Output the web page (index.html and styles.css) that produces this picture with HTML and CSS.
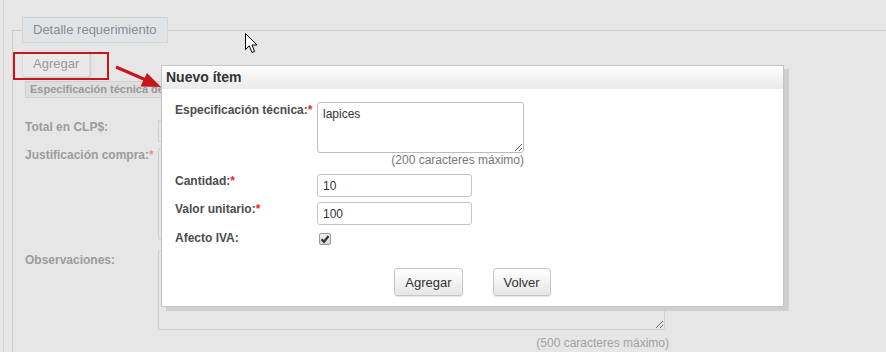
FILE: index.html
```html
<!DOCTYPE html>
<html lang="es">
<head>
    <meta charset="UTF-8">
    <meta name="viewport" content="width=device-width, initial-scale=1.0">
    <title>Detalle requerimiento</title>
    <link rel="stylesheet" href="styles.css">
</head>
<body>
    <div class="page">
        <div class="fieldset">
            <div class="legend">Detalle requerimiento</div>

            <button class="bg-button">Agregar</button>
            <div class="table-head">Especificación técnica del ítem</div>

            <div class="row row-total">
                <span class="bg-label">Total en CLP$:</span>
                <input class="bg-input" type="text" readonly>
            </div>
            <div class="row row-justif">
                <span class="bg-label">Justificación compra:<span class="req-light">*</span></span>
                <textarea class="bg-area bg-area-tall" readonly></textarea>
            </div>
            <div class="row row-obs">
                <span class="bg-label">Observaciones:</span>
                <textarea class="bg-area" readonly></textarea>
            </div>
            <div class="bg-note">(500 caracteres máximo)</div>
        </div>
    </div>

    <!-- resaltado del boton y flecha -->
    <div class="highlight"></div>
    <svg class="arrow" width="60" height="40" viewBox="110 60 60 40">
        <line x1="116" y1="67" x2="146" y2="80" stroke="#c4161c" stroke-width="3"/>
        <polygon points="161,87 140.5,86.5 147,73" fill="#c4161c"/>
    </svg>

    <div class="modal">
        <div class="modal-header">Nuevo ítem</div>
        <div class="modal-body">
            <div class="field">
                <label for="spec">Especificación técnica:<span class="req">*</span></label>
                <textarea id="spec" class="spec-area">lapices</textarea>
            </div>
            <div class="note">(200 caracteres máximo)</div>

            <div class="field field-qty">
                <label for="qty">Cantidad:<span class="req">*</span></label>
                <input id="qty" class="text-input" type="text" value="10">
            </div>
            <div class="field field-price">
                <label for="price">Valor unitario:<span class="req">*</span></label>
                <input id="price" class="text-input" type="text" value="100">
            </div>
            <div class="field field-iva">
                <label>Afecto IVA:</label>
                <span class="check">
                    <svg width="10" height="10" viewBox="0 0 10 10">
                        <path d="M1.5 5.2 L4 7.8 L8.6 2" fill="none" stroke="#333" stroke-width="2.2"/>
                    </svg>
                </span>
            </div>

            <div class="actions">
                <button class="btn">Agregar</button>
                <button class="btn">Volver</button>
            </div>
        </div>
    </div>

    <svg class="cursor" width="14" height="21" viewBox="0 0 14 21">
        <path d="M0.5 0.5 L0.5 16.5 L4.3 12.8 L7 19.5 L9.6 18.4 L7 12 L12 12 Z" fill="#fff" stroke="#000" stroke-width="1"/>
    </svg>
</body>
</html>
```

FILE: styles.css
```css
body {
    margin: 0;
    background-color: #e6e6e6;
    font-family: 'Liberation Sans', Arial, sans-serif;
    font-size: 12px;
    color: #333;
    overflow: hidden;
    height: 352px;
}
.page {
    margin-left: 3px;
    border-left: 1px solid #d6d6d6;
    height: 352px;
    padding-left: 8px;
    overflow: hidden;
}
.fieldset {
    margin-top: 30px;
    border-top: 1px solid #cdcdcd;
    border-left: 1px solid #cdcdcd;
    padding-left: 9px;
    height: 340px;
}
.legend {
    display: block;
    width: max-content;
    margin-top: -14px;
    height: 24px;
    line-height: 24px;
    padding: 0 10px;
    font-size: 13px;
    color: #8c8c8c;
    background: #e1e4e7;
    border: 1px solid #d2d5d8;
}
.bg-button {
    display: block;
    margin-top: 7px;
    height: 27px;
    padding: 0 10px;
    font-family: inherit;
    font-size: 13px;
    color: #999;
    background: #e9e9e9;
    border: 1px solid #dadada;
    border-radius: 2px;
    box-shadow: 1px 1px 2px rgba(0, 0, 0, 0.12);
}
.table-head {
    margin: 4px 0 0 3px;
    width: 640px;
    height: 15px;
    line-height: 15px;
    padding-left: 4px;
    font-size: 11px;
    font-weight: bold;
    color: #999;
    background: #dedede;
    border: 1px solid #d0d0d0;
    white-space: nowrap;
    overflow: hidden;
}
.row {
    display: flex;
    align-items: flex-start;
    margin-left: 3px;
}
.bg-label {
    width: 133px;
    flex-shrink: 0;
    font-weight: bold;
    line-height: 14px;
    color: #9c9c9c;
}
.req-light {
    color: #f09090;
}
.row-total {
    margin-top: 22px;
}
.row-justif {
    margin-top: 6px;
}
.row-obs {
    margin-top: 10px;
}
.row-obs .bg-label {
    padding-top: 3px;
}
.bg-input {
    width: 200px;
    height: 22px;
    box-sizing: border-box;
    margin: 0;
    background: #e6e6e6;
    border: 1px solid #cfcfcf;
}
.bg-area {
    display: block;
    width: 507px;
    height: 80px;
    box-sizing: border-box;
    background: #e6e6e6;
    border: 1px solid #cfcfcf;
    border-radius: 2px;
    margin: 0;
}
.bg-area-tall {
    height: 92px;
}
.bg-note {
    margin: 6px 0 0 136px;
    width: 511px;
    text-align: right;
    line-height: 14px;
    color: #a2a2a2;
}

.highlight {
    position: absolute;
    left: 13px;
    top: 52px;
    width: 96px;
    height: 28px;
    box-sizing: border-box;
    border: 2px solid #c4161c;
}
.arrow {
    position: absolute;
    left: 110px;
    top: 60px;
}

.modal {
    position: absolute;
    left: 161px;
    top: 65px;
    width: 623px;
    box-sizing: border-box;
    background: #fff;
    border: 1px solid #c6c6c6;
    box-shadow: 5px 4px 0 #cfcfcf;
}
.modal-header {
    height: 23px;
    line-height: 23px;
    padding-left: 4px;
    font-size: 14px;
    font-weight: bold;
    color: #333;
    background: linear-gradient(#fefefe, #eaeaea);
}
.modal-body {
    padding: 13px 13px 10px;
}
.field {
    display: flex;
    align-items: flex-start;
}
.field label {
    width: 142px;
    flex-shrink: 0;
    font-weight: bold;
    line-height: 14px;
    color: #4d4d4d;
}
.field:first-child label {
    padding-top: 1px;
}
.req {
    color: #e42b2b;
}
.spec-area {
    width: 207px;
    height: 51px;
    box-sizing: border-box;
    margin: 0;
    padding: 4px 5px;
    font-family: inherit;
    font-size: 12px;
    line-height: 14px;
    color: #333;
    border: 1px solid #bdbdbd;
    border-radius: 3px;
    resize: both;
}
.note {
    margin-left: 142px;
    width: 207px;
    text-align: right;
    line-height: 14px;
    color: #777;
}
.field-qty {
    margin-top: 7px;
}
.field-price {
    margin-top: 5px;
}
.text-input {
    width: 155px;
    height: 23px;
    box-sizing: border-box;
    margin: 0;
    padding: 0 5px;
    font-family: inherit;
    font-size: 12px;
    color: #333;
    border: 1px solid #c4c4c4;
    border-radius: 3px;
}
.field-iva {
    margin-top: 8px;
}
.field-iva label {
    margin-top: -2px;
}
.check {
    margin-left: 2px;
    width: 12px;
    height: 12px;
    box-sizing: border-box;
    display: flex;
    align-items: center;
    justify-content: center;
    background: linear-gradient(#f2f2f2, #d6d6d6);
    border: 1px solid #9a9a9a;
    border-radius: 2px;
}
.actions {
    margin-top: 23px;
    display: flex;
    justify-content: center;
    gap: 30px;
}
.btn {
    height: 28px;
    padding: 0 10px;
    font-family: inherit;
    font-size: 13px;
    color: #333;
    background: linear-gradient(#ffffff, #e6e6e6);
    border: 1px solid #c6c6c6;
    border-radius: 3px;
    box-shadow: 0 1px 1px rgba(0, 0, 0, 0.1);
}

.cursor {
    position: absolute;
    left: 245px;
    top: 33px;
}
```
